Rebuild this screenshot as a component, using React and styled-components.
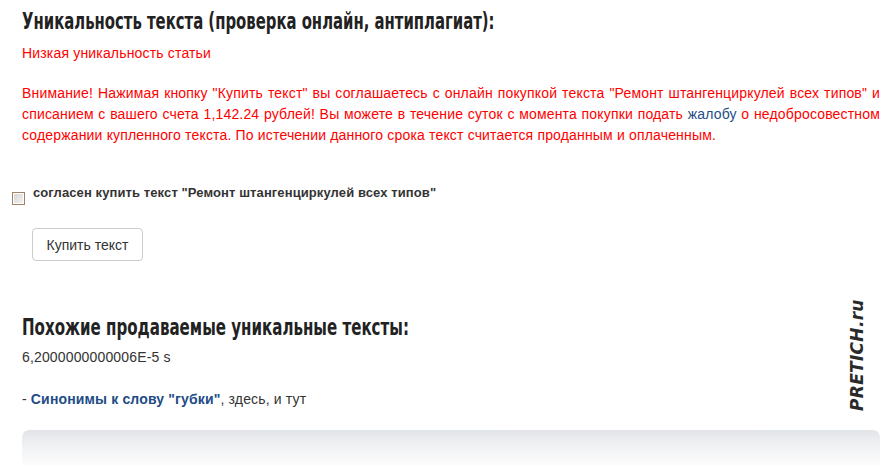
import React from 'react'
import styled, { createGlobalStyle } from 'styled-components'

const GlobalStyle = createGlobalStyle`
  html, body {
    margin: 0;
    padding: 0;
    background: #ffffff;
  }
  body {
    font-family: "Liberation Sans", Arial, sans-serif;
    font-size: 14px;
    color: #333333;
  }
`

const Page = styled.div`
  position: relative;
  width: 888px;
  height: 465px;
  overflow: hidden;
  box-sizing: border-box;
  padding: 0 8px 0 22px;
`

// narrow bold headline (the original uses a narrow sans)
const Heading = styled.h2`
  margin: ${p => p.$top || 0}px 0 0 0;
  font-family: "DejaVu Sans Condensed", "DejaVu Sans", sans-serif;
  font-weight: bold;
  font-size: 23px;
  line-height: 28px;
  color: #222222;
  white-space: nowrap;
  transform: scaleX(${p => p.$squeeze || 0.718});
  transform-origin: 0 50%;
`

const Notice = styled.div`
  margin-top: ${p => p.$top || 0}px;
  color: #ff0000;
  font-size: 14px;
  line-height: 21px;
  letter-spacing: 0.17px;
  text-align: ${p => (p.$justify ? 'justify' : 'left')};
`

const Link = styled.a`
  color: #1e4c86;
  text-decoration: none;
  font-weight: ${p => (p.$bold ? 'bold' : 'normal')};
`

const AgreeRow = styled.label`
  display: flex;
  align-items: flex-start;
  margin: 39px 0 0 -10px;
`

const Box = styled.span`
  display: block;
  width: 11px;
  height: 11px;
  margin: 7px 8px 0 0;
  border: 1px solid #a08266;
  background: linear-gradient(135deg, #d4d4d4 0%, #f4f4f4 100%);
  box-shadow: inset 0 0 0 1px #ffffff;
`

const AgreeText = styled.span`
  font-weight: bold;
  font-size: 13px;
  line-height: 16px;
  letter-spacing: 0.1px;
  color: #333333;
`

const BuyButton = styled.button`
  display: block;
  margin: 23px 0 0 10px;
  width: 111px;
  height: 33px;
  padding: 0;
  border: 1px solid #cccccc;
  border-radius: 4px;
  background: #ffffff;
  font-family: "Liberation Sans", Arial, sans-serif;
  font-size: 14px;
  color: #333333;
`

const Plain = styled.div`
  margin-top: ${p => p.$top || 0}px;
  font-size: 14px;
  line-height: 18px;
  letter-spacing: 0.15px;
  color: #333333;
`

const BottomBar = styled.div`
  margin-top: 22px;
  height: 40px;
  border-radius: 7px 7px 0 0;
  background: linear-gradient(#e2e5e8 0%, #f2f3f5 45%, #ffffff 100%);
`

const Watermark = styled.div`
  position: absolute;
  left: 847px;
  top: 411px;
  transform: rotate(-90deg);
  transform-origin: 0 0;
  font-family: "DejaVu Sans", Verdana, sans-serif;
  font-weight: bold;
  font-style: italic;
  font-size: 17px;
  line-height: 20px;
  letter-spacing: 0.3px;
  color: #2a2a2a;
  white-space: nowrap;
`

export default function App () {
  return <Page>
    <GlobalStyle />
    <Heading $top={7}>Уникальность текста (проверка онлайн, антиплагиат):</Heading>
    <Notice $top={8}>Низкая уникальность статьи</Notice>
    <Notice $top={19} $justify>
      Внимание! Нажимая кнопку "Купить текст" вы соглашаетесь с онлайн покупкой текста "Ремонт штангенциркулей всех типов" и списанием с вашего счета 1,142.24 рублей! Вы можете в течение суток с момента покупки подать <Link href="#">жалобу</Link> о недобросовестном содержании купленного текста. По истечении данного срока текст считается проданным и оплаченным.
    </Notice>

    <AgreeRow>
      <Box />
      <AgreeText>согласен купить текст "Ремонт штангенциркулей всех типов"</AgreeText>
    </AgreeRow>
    <BuyButton>Купить текст</BuyButton>

    <Heading $top={52} $squeeze={0.728}>Похожие продаваемые уникальные тексты:</Heading>
    <Plain $top={7}>6,2000000000006E-5 s</Plain>
    <Plain $top={24}>- <Link href="#" $bold>Синонимы к слову "губки"</Link>, здесь, и тут</Plain>

    <BottomBar />
    <Watermark>PRETICH.ru</Watermark>
  </Page>
}
